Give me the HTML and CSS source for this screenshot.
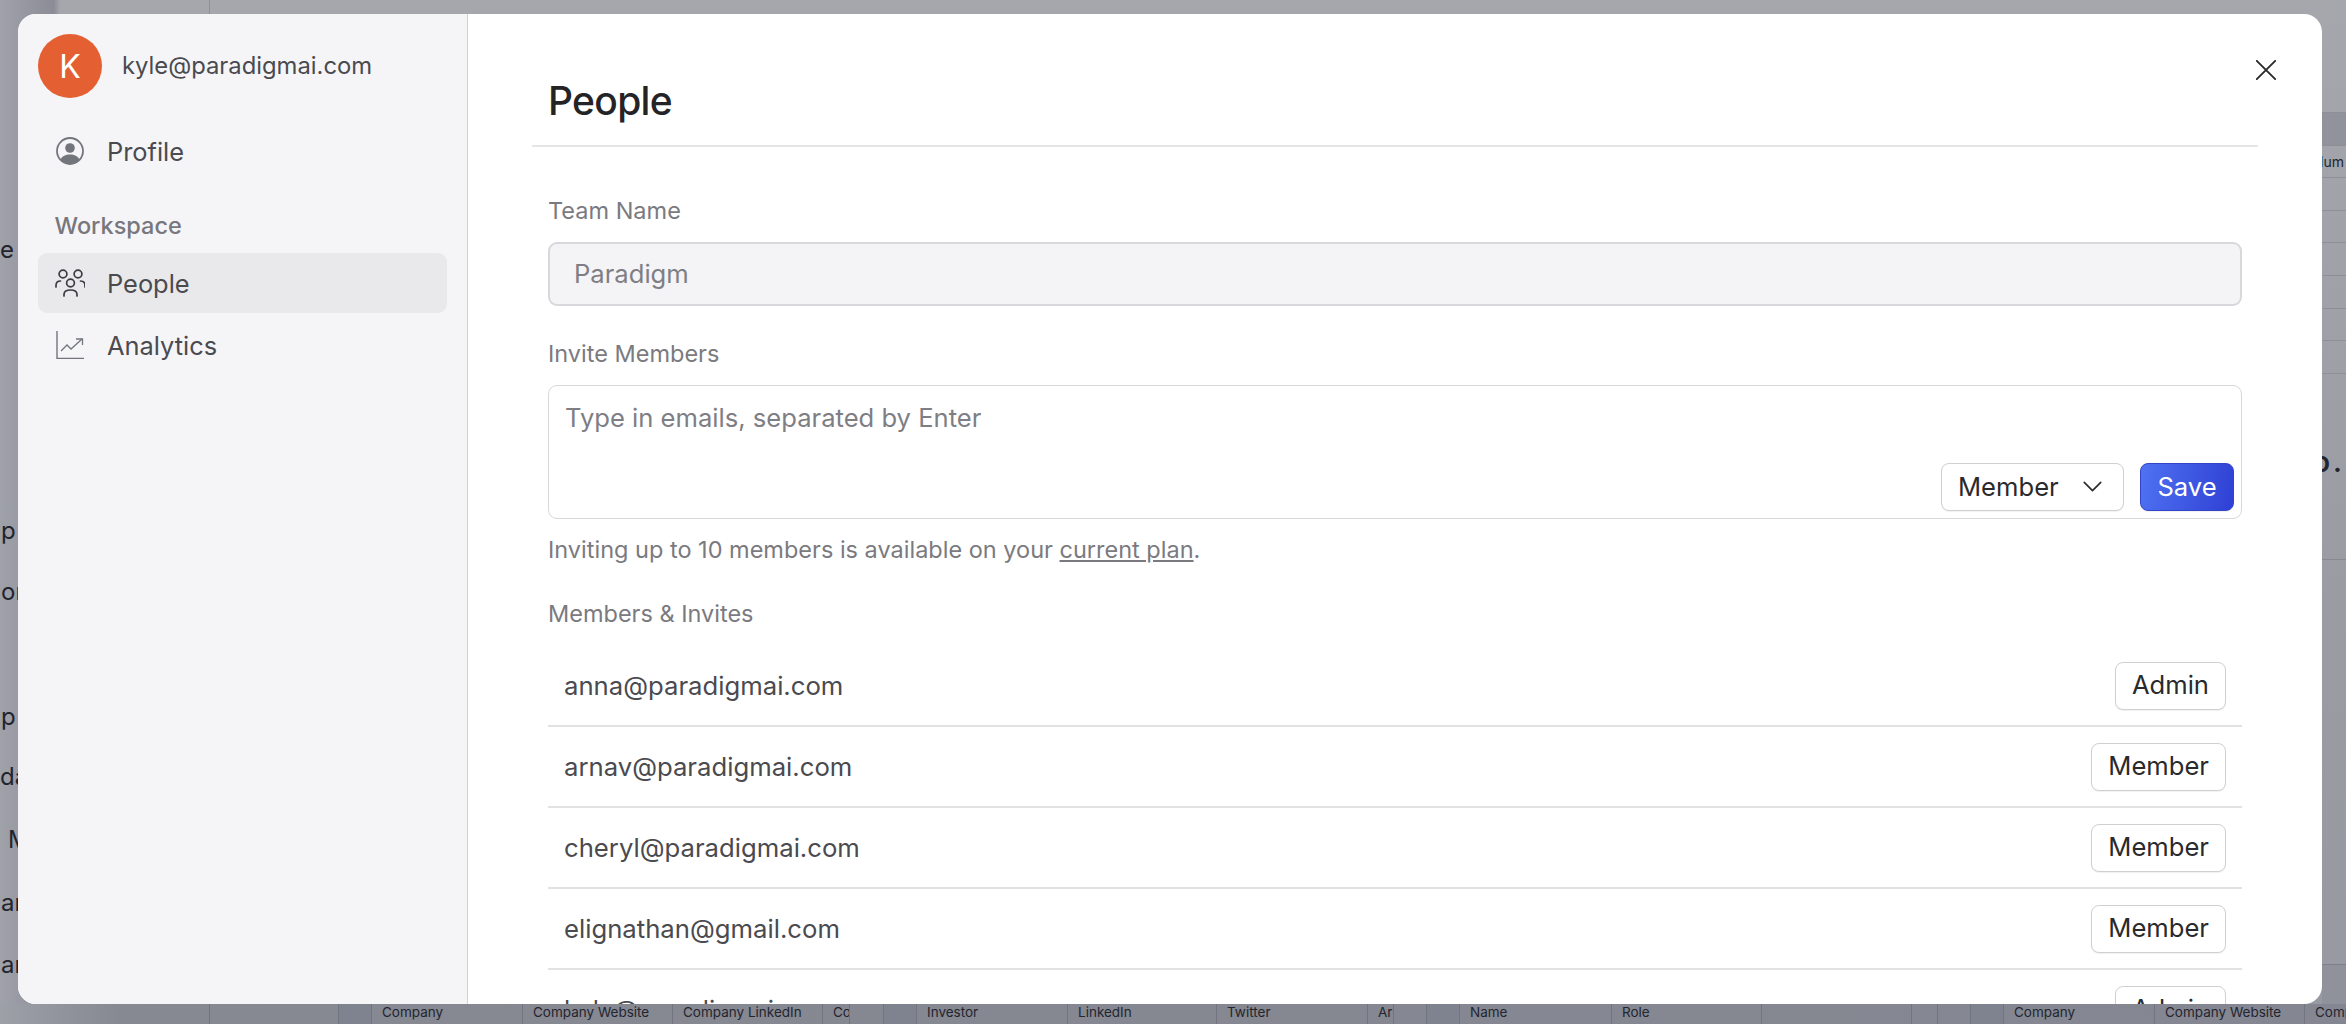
FILE: index.html
```html
<!DOCTYPE html>
<html lang="en">
<head>
<meta charset="utf-8">
<title>People</title>
<link rel="stylesheet" href="styles.css">
</head>
<body>
<div class="backdrop">
  <span class="top-rule"></span>
  <span class="ghost g1">e</span>
  <span class="ghost g2">p</span>
  <span class="ghost g3">on</span>
  <span class="ghost g4">p</span>
  <span class="ghost g5">da</span>
  <span class="ghost g6">M</span>
  <span class="ghost g7">ar</span>
  <span class="ghost g8">ar</span>
  <div class="side-rows">
    <div class="side-row band"></div>
    <div class="side-row"><span class="side-label">Num</span></div>
    <div class="side-row"></div>
    <div class="side-row"></div>
    <div class="side-row"></div>
    <div class="side-row"></div>
    <div class="side-row"></div>
    <div class="side-row"></div>
    <div class="side-row"></div>
  </div>
  <span class="side-title">o...</span>
  <span class="side-rule"></span>
  <span class="side-foot"></span>
  <div class="table-strip">
    <span class="cell c129"></span><span class="cell c33 shade"></span>
    <span class="cell c151">Company</span><span class="cell c150">Company Website</span><span class="cell c150">Company LinkedIn</span><span class="cell c27">Co</span><span class="cell c34"></span><span class="cell c33 shade"></span>
    <span class="cell c151">Investor</span><span class="cell c149">LinkedIn</span><span class="cell c151">Twitter</span><span class="cell c26">Ar</span><span class="cell c33"></span><span class="cell c33 shade"></span>
    <span class="cell c152">Name</span><span class="cell c150">Role</span><span class="cell c150"></span><span class="cell c26"></span><span class="cell c33"></span><span class="cell c33 shade"></span>
    <span class="cell c151">Company</span><span class="cell c150">Company Website</span><span class="cell c42">Comp</span>
  </div>
</div>

<div class="modal">
  <aside class="sidebar">
    <div class="account">
      <div class="avatar">K</div>
      <span class="account-email">kyle@paradigmai.com</span>
    </div>
    <a class="nav-item">
      <svg class="nav-icon" viewBox="0 0 28 28" width="28" height="28" fill="none">
        <circle cx="14" cy="14" r="13" stroke="#73757d" stroke-width="1.8"/>
        <circle cx="14" cy="11" r="4.8" fill="#73757d"/>
        <path d="M4.6 22.6C6 18.8 9.6 17.4 14 17.4s8 1.4 9.4 5.2A13 13 0 0 1 14 27a13 13 0 0 1-9.4-4.4Z" fill="#73757d"/>
      </svg>
      <span>Profile</span>
    </a>
    <div class="nav-heading">Workspace</div>
    <a class="nav-item active">
      <svg class="nav-icon" viewBox="0 0 30 28" width="30" height="28" fill="none" stroke="#3c3d44" stroke-width="1.7" stroke-linecap="round">
        <circle cx="8" cy="5" r="3.9"/>
        <circle cx="23" cy="5" r="3.9"/>
        <circle cx="15.500" cy="14" r="3.9"/>
        <path d="M1 18v-1.500C1 13.600 3 12 5.500 12"/>
        <path d="M30 18v-1.500c0-2.900-2-4.500-4.500-4.500"/>
        <path d="M9 27v-1.500c0-3 2.500-4.500 6.500-4.500s6.500 1.500 6.500 4.500V27"/>
      </svg>
      <span>People</span>
    </a>
    <a class="nav-item">
      <svg class="nav-icon" viewBox="0 0 28 28" width="28" height="28" fill="none" stroke="#73757d" stroke-width="1.4">
        <path d="M1 0v27.500h27"/>
        <path d="M5 20l6-6 4 4 11-10" stroke-width="1.300"/>
        <path d="M20 8h6.500v6" stroke-width="1.300"/>
      </svg>
      <span>Analytics</span>
    </a>
  </aside>

  <main class="content">
    <button class="close" aria-label="Close">
      <svg viewBox="0 0 20 20" width="20" height="20" fill="none" stroke="#2b2b2e" stroke-width="1.900" stroke-linecap="round"><path d="M0.800 0.800l18.400 18.400M19.200 0.800L0.800 19.200"/></svg>
    </button>
    <header class="page-head">
      <h1>People</h1>
    </header>
    <div class="form">
      <label class="field-label first">Team Name</label>
      <div class="team-input">Paradigm</div>
      <label class="field-label second">Invite Members</label>
      <div class="invite-box">
        <div class="placeholder">Type in emails, separated by Enter</div>
        <div class="invite-actions">
          <button class="btn select"><span>Member</span>
            <svg viewBox="0 0 20 12" width="19" height="11" fill="none" stroke="#2b2b2e" stroke-width="1.800" stroke-linecap="round" stroke-linejoin="round"><path d="M1 1.500l9 9 9-9"/></svg>
          </button>
          <button class="btn save">Save</button>
        </div>
      </div>
      <p class="help">Inviting up to 10 members is available on your <u>current plan</u>.</p>
      <div class="list-label">Members &amp; Invites</div>
      <ul class="members">
        <li class="member"><span>anna@paradigmai.com</span><button class="btn role">Admin</button></li>
        <li class="member"><span>arnav@paradigmai.com</span><button class="btn role">Member</button></li>
        <li class="member"><span>cheryl@paradigmai.com</span><button class="btn role">Member</button></li>
        <li class="member"><span>elignathan@gmail.com</span><button class="btn role">Member</button></li>
        <li class="member"><span>kyle@paradigmai.com</span><button class="btn role">Admin</button></li>
      </ul>
    </div>
  </main>
</div>
</body>
</html>
```
FILE: styles.css
```css
* { box-sizing: border-box; }
html, body { margin: 0; height: 100%; }
body {
  width: 2346px;
  height: 1024px;
  overflow: hidden;
  position: relative;
  font-family: Inter, "Liberation Sans", sans-serif;
  background: #a6a7ad;
}

/* dimmed application behind the dialog */
.backdrop {
  position: absolute;
  inset: 0;
  overflow: hidden;
  background:
    linear-gradient(90deg, #a0a2aa 0, #8b8c96 54px, rgba(139,140,150,0) 60px),
    linear-gradient(180deg, #a6a7ad 0, #a2a3aa 200px, #9a9ba3 600px, #979aa2 1024px);
}
.top-rule { position: absolute; left: 209px; top: 0; width: 1px; height: 14px; background: #8e9099; }
.ghost {
  position: absolute;
  font-size: 24px;
  line-height: 30px;
  color: #22242e;
}
.g1 { left: 0; top: 235px; }
.g2 { left: 1px; top: 516px; }
.g3 { left: 1px; top: 577px; }
.g4 { left: 1px; top: 702px; }
.g5 { left: 0; top: 762px; }
.g6 { left: 8px; top: 825px; }
.g7 { left: 1px; top: 888px; }
.g8 { left: 1px; top: 950px; }
.side-rows {
  position: absolute;
  left: 2322px;
  top: 112px;
  width: 24px;
  overflow: hidden;
}
.side-row {
  height: 32.600px;
  border-top: 1px solid #8e9099;
  font-size: 14px;
  line-height: 32px;
  overflow: hidden;
  white-space: nowrap;
  color: #22242e;
}
.side-row.band { background: #90929c; }
.side-label { margin-left: -9px; }
.side-title {
  position: absolute;
  left: 2313px;
  top: 445px;
  width: 33px;
  overflow: hidden;
  font-size: 28px;
  font-weight: 600;
  letter-spacing: 3px;
  line-height: 34px;
  white-space: nowrap;
  color: #22242e;
}
.side-rule { position: absolute; left: 2322px; top: 559px; width: 24px; height: 1px; background: #868892; }
.side-foot { position: absolute; left: 2322px; top: 964px; width: 24px; height: 40px; background: #8f919b; border-top: 1px solid #7e808b; }

.table-strip {
  position: absolute;
  left: 0;
  top: 1004px;
  width: 2346px;
  height: 20px;
  padding: 0 0 0 209px;
  display: flex;
  background: linear-gradient(90deg, #9ea0a8 0, #868892 120px, #848791 100%);
}
.cell {
  flex: none;
  height: 20px;
  padding-left: 10px;
  font-size: 13.5px;
  line-height: 17px;
  color: #23252f;
  border-left: 1px solid #72747f;
  overflow: hidden;
  white-space: nowrap;
}
.shade { background: #7f838f; }
.c129 { width: 129px; }
.c33 { width: 33px; }
.c34 { width: 34px; }
.c151 { width: 151px; }
.c150 { width: 150px; }
.c149 { width: 149px; }
.c152 { width: 152px; }
.c27 { width: 27px; }
.c26 { width: 26px; }
.c42 { width: 42px; }

/* dialog */
.modal {
  position: absolute;
  left: 18px;
  top: 14px;
  width: 2304px;
  height: 990px;
  display: flex;
  border-radius: 18px;
  overflow: hidden;
  background: #fff;
}
.sidebar {
  flex: none;
  width: 450px;
  padding: 20px 20px 0;
  background: #f5f5f8;
  border-right: 1px solid #d1d2d6;
  display: flex;
  flex-direction: column;
}
.account {
  display: flex;
  align-items: center;
  gap: 20px;
  height: 64px;
  margin-bottom: 23px;
}
.account > .account-email { margin-top: -2px; }
.avatar {
  width: 64px;
  height: 64px;
  border-radius: 50%;
  background: #e46033;
  color: #fff;
  font-size: 32px;
  display: flex;
  align-items: center;
  justify-content: center;
}
.account-email { font-size: 23.800px; color: #4a4a4f; }
.nav-item {
  display: flex;
  align-items: center;
  height: 60px;
  padding-left: 18px;
  border-radius: 9px;
  font-size: 25.400px;
  color: #4a4a4f;
}
.nav-item + .nav-item { margin-top: 2px; }
.nav-item.active { background: #e9e9eb; }
.nav-item.active .nav-icon { margin-left: -1px; margin-right: 22px; }
.nav-icon { flex: none; margin-right: 23px; }
.nav-heading {
  margin: 30px 0 12px 16.500px;
  height: 30px;
  line-height: 30px;
  font-size: 23.500px;
  font-weight: 500;
  color: #77777c;
}

.content {
  flex: 1;
  min-width: 0;
  position: relative;
  padding: 0 64px 0 64px;
}
.close {
  position: absolute;
  left: 1788px;
  top: 46px;
  width: 20px;
  height: 20px;
  padding: 0;
  border: 0;
  background: none;
  display: flex;
}
.page-head {
  height: 133px;
  border-bottom: 2px solid #e5e5e7;
  padding: 0 0 0 16px;
}
.page-head h1 {
  margin: 0;
  padding-top: 63px;
  font-size: 39px;
  line-height: 48px;
  font-weight: 500;
  letter-spacing: -0.700px;
  color: #242426;
}
.form { padding-left: 16px; width: 1710px; }
.field-label {
  display: block;
  font-size: 23.500px;
  line-height: 30px;
  color: #7a7a7f;
}
.field-label.first { margin-top: 49px; }
.field-label.second { margin-top: 33px; }
.team-input {
  margin-top: 16px;
  height: 64px;
  border: 2px solid #d8d8dc;
  border-radius: 9px;
  background: #f4f4f6;
  padding-left: 24px;
  font-size: 25.600px;
  line-height: 60px;
  color: #7e7e84;
}
.invite-box {
  margin-top: 16px;
  height: 134px;
  border: 1px solid #d8d8dc;
  border-radius: 9px;
  padding: 17px 7px 7px 16px;
  display: flex;
  flex-direction: column;
  justify-content: space-between;
}
.placeholder { font-size: 25.600px; line-height: 30px; color: #7e7e84; }
.invite-actions { display: flex; justify-content: flex-end; gap: 16px; }
.btn {
  font-family: inherit;
  font-size: 25.600px;
  line-height: 30px;
  height: 48px;
  padding: 0 16px 1px;
  border: 1px solid #d0d0d4;
  border-radius: 8px;
  background: #fff;
  color: #2a2a2c;
  box-shadow: 0 1px 1px rgba(0,0,0,.06);
  display: inline-flex;
  align-items: center;
}
.select { width: 183px; justify-content: space-between; padding-right: 21px; }
.save {
  width: 94px;
  justify-content: center;
  padding: 0 0 1px;
  color: #fff;
  border-color: #3245c8;
  background: linear-gradient(100deg, #4f72f2 0, #2f40d4 100%);
}
.help {
  margin: 16px 0 0;
  font-size: 23.500px;
  line-height: 30px;
  color: #7a7a7f;
}
.list-label {
  margin-top: 34px;
  font-size: 23.500px;
  line-height: 30px;
  color: #7a7a7f;
}
.members { list-style: none; margin: 17px 0 0; padding: 0; }
.member {
  height: 81px;
  display: flex;
  align-items: center;
  justify-content: space-between;
  padding: 0 16px;
  border-bottom: 2px solid #e2e2e5;
  font-size: 25.700px;
  color: #4a4a4f;
}
```
